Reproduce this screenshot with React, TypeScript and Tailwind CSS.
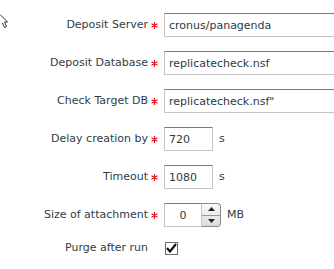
import React from "react";

const font = { fontFamily: '"DejaVu Sans", Verdana, sans-serif' };

function Star() {
  return (
    <span className="flex w-4 shrink-0 justify-start pl-[3px]">
      <svg width="7" height="7" viewBox="0 0 7 7">
        <path d="M3.5 0V7M0.5 1.75L6.5 5.25M0.5 5.25L6.5 1.75" stroke="#e0141e" strokeWidth="1.2" />
      </svg>
    </span>
  );
}

function Label({ text, required = true }: { text: string; required?: boolean }) {
  return (
    <>
      <span className="w-[148px] shrink-0 text-right">{text}</span>
      {required ? <Star /> : <span className="w-4 shrink-0" />}
    </>
  );
}

const inputCls =
  "h-6 shrink-0 border border-[#c4c4c4] border-t-[#7b7b7b] bg-white px-[4px] text-[11px] text-[#2c3a44] outline-none";

function TextRow({ label, value }: { label: string; value: string }) {
  return (
    <div className="flex h-6 items-center">
      <Label text={label} />
      <input className={`${inputCls} w-[200px]`} defaultValue={value} style={font} />
    </div>
  );
}

function UnitRow({ label, value, unit }: { label: string; value: string; unit: string }) {
  return (
    <div className="flex h-6 items-center">
      <Label text={label} />
      <input className={`${inputCls} w-[49px]`} defaultValue={value} style={font} />
      <span className="ml-[6px]">{unit}</span>
    </div>
  );
}

function Spinner() {
  return (
    <div className="flex h-6 w-[19px] shrink-0 flex-col overflow-hidden rounded-r-[4px] border border-l-0 border-[#8a8a8a] bg-gradient-to-b from-[#fafafa] to-[#dcdcdc]">
      <div className="flex flex-1 items-center justify-center border-b border-[#9a9a9a]">
        <svg width="7" height="4" viewBox="0 0 7 4">
          <path d="M3.5 0L7 4H0Z" fill="#222" />
        </svg>
      </div>
      <div className="flex flex-1 items-center justify-center">
        <svg width="7" height="4" viewBox="0 0 7 4">
          <path d="M0 0H7L3.5 4Z" fill="#222" />
        </svg>
      </div>
    </div>
  );
}

export default function App() {
  return (
    <div className="relative h-[269px] w-[334px] overflow-hidden bg-white text-[11px] text-[#2f3d47]" style={font}>
      <svg className="absolute left-0 top-[14px]" width="10" height="14" viewBox="0 0 10 14">
        <path d="M0 0.5L7.5 8H4.5L6.5 12.5L4.5 13.5L2.5 9" fill="#fff" stroke="#333" strokeWidth="1" />
      </svg>
      <div className="flex flex-col gap-[14px] pt-[13px]">
        <TextRow label="Deposit Server" value="cronus/panagenda" />
        <TextRow label="Deposit Database" value="replicatecheck.nsf" />
        <TextRow label="Check Target DB" value={'replicatecheck.nsf"'} />
        <UnitRow label="Delay creation by" value="720" unit="s" />
        <UnitRow label="Timeout" value="1080" unit="s" />
        <div className="flex h-6 items-center">
          <Label text="Size of attachment" />
          <input className={`${inputCls} w-[38px] text-center`} defaultValue="0" style={font} />
          <Spinner />
          <span className="ml-[6px]">MB</span>
        </div>
        <div className="-mt-[2px] flex h-[18px] items-center">
          <Label text="Purge after run" required={false} />
          <span className="ml-[1px] flex h-[13px] w-[13px] items-center justify-center border border-[#6e6e6e] bg-white">
            <svg width="11" height="10" viewBox="0 0 11 10">
              <path d="M1 5L4 8.5L10 1" fill="none" stroke="#111" strokeWidth="2.2" />
            </svg>
          </span>
        </div>
      </div>
    </div>
  );
}
